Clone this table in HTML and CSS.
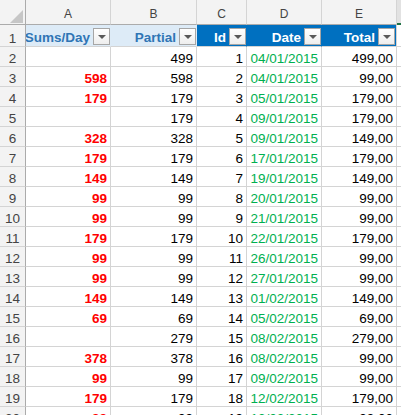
FILE: index.html
```html
<!DOCTYPE html>
<html>
<head>
<meta charset="utf-8">
<link rel="stylesheet" href="styles.css">
</head>
<body>
<div class="sheet">
  <div class="ch corner"></div>
  <div class="ch">A</div>
  <div class="ch">B</div>
  <div class="ch">C</div>
  <div class="ch">D</div>
  <div class="ch">E</div>
  <div class="ch sel"></div>

  <div class="rh">1</div>
  <div class="th light"><span>Sums/Day</span><i class="dd"></i></div>
  <div class="th light"><span>Partial</span><i class="dd"></i></div>
  <div class="th dark"><span>Id</span><i class="dd"></i></div>
  <div class="th dark"><span>Date</span><i class="dd"></i></div>
  <div class="th dark last"><span>Total</span><i class="dd"></i></div>
  <div class="c f"></div>

  <div class="rh">2</div><div class="c red"></div><div class="c">499</div><div class="c">1</div><div class="c date">04/01/2015</div><div class="c">499,00</div><div class="c f"></div>
  <div class="rh">3</div><div class="c red">598</div><div class="c">598</div><div class="c">2</div><div class="c date">04/01/2015</div><div class="c">99,00</div><div class="c f"></div>
  <div class="rh">4</div><div class="c red">179</div><div class="c">179</div><div class="c">3</div><div class="c date">05/01/2015</div><div class="c">179,00</div><div class="c f"></div>
  <div class="rh">5</div><div class="c red"></div><div class="c">179</div><div class="c">4</div><div class="c date">09/01/2015</div><div class="c">179,00</div><div class="c f"></div>
  <div class="rh">6</div><div class="c red">328</div><div class="c">328</div><div class="c">5</div><div class="c date">09/01/2015</div><div class="c">149,00</div><div class="c f"></div>
  <div class="rh">7</div><div class="c red">179</div><div class="c">179</div><div class="c">6</div><div class="c date">17/01/2015</div><div class="c">179,00</div><div class="c f"></div>
  <div class="rh">8</div><div class="c red">149</div><div class="c">149</div><div class="c">7</div><div class="c date">19/01/2015</div><div class="c">149,00</div><div class="c f"></div>
  <div class="rh">9</div><div class="c red">99</div><div class="c">99</div><div class="c">8</div><div class="c date">20/01/2015</div><div class="c">99,00</div><div class="c f"></div>
  <div class="rh">10</div><div class="c red">99</div><div class="c">99</div><div class="c">9</div><div class="c date">21/01/2015</div><div class="c">99,00</div><div class="c f"></div>
  <div class="rh">11</div><div class="c red">179</div><div class="c">179</div><div class="c">10</div><div class="c date">22/01/2015</div><div class="c">179,00</div><div class="c f"></div>
  <div class="rh">12</div><div class="c red">99</div><div class="c">99</div><div class="c">11</div><div class="c date">26/01/2015</div><div class="c">99,00</div><div class="c f"></div>
  <div class="rh">13</div><div class="c red">99</div><div class="c">99</div><div class="c">12</div><div class="c date">27/01/2015</div><div class="c">99,00</div><div class="c f"></div>
  <div class="rh">14</div><div class="c red">149</div><div class="c">149</div><div class="c">13</div><div class="c date">01/02/2015</div><div class="c">149,00</div><div class="c f"></div>
  <div class="rh">15</div><div class="c red">69</div><div class="c">69</div><div class="c">14</div><div class="c date">05/02/2015</div><div class="c">69,00</div><div class="c f"></div>
  <div class="rh">16</div><div class="c red"></div><div class="c">279</div><div class="c">15</div><div class="c date">08/02/2015</div><div class="c">279,00</div><div class="c f"></div>
  <div class="rh">17</div><div class="c red">378</div><div class="c">378</div><div class="c">16</div><div class="c date">08/02/2015</div><div class="c">99,00</div><div class="c f"></div>
  <div class="rh">18</div><div class="c red">99</div><div class="c">99</div><div class="c">17</div><div class="c date">09/02/2015</div><div class="c">99,00</div><div class="c f"></div>
  <div class="rh">19</div><div class="c red">179</div><div class="c">179</div><div class="c">18</div><div class="c date">12/02/2015</div><div class="c">179,00</div><div class="c f"></div>
  <div class="rh">20</div><div class="c red">99</div><div class="c">99</div><div class="c">19</div><div class="c date">13/02/2015</div><div class="c">99,00</div><div class="c f"></div>
</div>
</body>
</html>
```

FILE: styles.css
```css
html, body {
  margin: 0;
  padding: 0;
  background: #ffffff;
}
body {
  width: 401px;
  height: 415px;
  overflow: hidden;
  font-family: "Liberation Sans", Arial, sans-serif;
  font-size: 13.5px;
  color: #000;
}
.sheet {
  display: grid;
  grid-template-columns: 26px 85px 86px 50px 75px 75px 40px;
  grid-template-rows: 25px 22px;
  grid-auto-rows: 20px;
}
.sheet > div {
  box-sizing: border-box;
  display: flex;
  align-items: flex-end;
  line-height: 15px;
  white-space: nowrap;
  overflow: hidden;
}
.ch {
  background: #f3f3f3;
  border-right: 1px solid #d4d4d4;
  border-bottom: 1px solid #ababab;
  justify-content: center;
  font-size: 12px;
  color: #444;
  padding-bottom: 2px;
}
.corner {
  position: relative;
  border-right-color: #ababab;
}
.corner::after {
  content: "";
  position: absolute;
  right: 2px;
  bottom: 1px;
  width: 13px;
  height: 13px;
  background: #c6c6c6;
  clip-path: polygon(100% 0, 100% 100%, 0 100%);
}
.ch.sel {
  border-right: none;
  border-bottom: 2px solid #217346;
  background: #e2e2e2;
}
.rh {
  background: #f3f3f3;
  border-right: 1px solid #ababab;
  border-bottom: 1px solid #d4d4d4;
  justify-content: center;
  color: #444;
}
.c {
  border-right: 1px solid #d4d4d4;
  border-bottom: 1px solid #d4d4d4;
  justify-content: flex-end;
  padding-right: 3px;
}
.c.f {
  border-right: none;
}
.red {
  color: #ff0000;
  font-weight: bold;
}
.date {
  color: #00b050;
}
.th {
  justify-content: flex-end;
  align-items: flex-end;
  gap: 3px;
  font-weight: bold;
  padding-bottom: 1px;
  border-bottom: 1px solid #d4d4d4;
}
.th.light {
  background: #ddebf7;
  color: #2f75b5;
  border-right: 1px solid #ddebf7;
}
.th.dark {
  background: #0070c0;
  color: #ffffff;
  border-right: 1px solid #0070c0;
}
.th.last {
  padding-right: 1px;
  border-right: 1px solid #d4d4d4;
}
.dd {
  display: block;
  flex: none;
  box-sizing: border-box;
  width: 17px;
  height: 17px;
  border: 1px solid #a6a6a6;
  background: linear-gradient(#ffffff, #eeeeee);
  position: relative;
}
.dd::after {
  content: "";
  position: absolute;
  left: 4px;
  top: 6px;
  width: 0;
  height: 0;
  border-left: 4px solid transparent;
  border-right: 4px solid transparent;
  border-top: 4px solid #595959;
}
```
